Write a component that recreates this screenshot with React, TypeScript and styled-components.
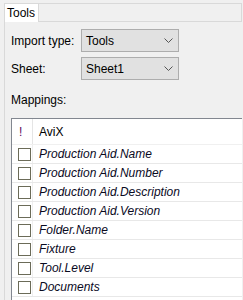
import React from 'react';
import styled, { createGlobalStyle } from 'styled-components';

const GlobalStyle = createGlobalStyle`
	html, body {
		margin: 0;
		padding: 0;
		background: #f0f0f0;
		font-family: 'Liberation Sans', Arial, sans-serif;
		font-size: 12px;
		color: #000;
		overflow: hidden;
	}
`;

const Frame = styled.div`
	margin: 3px 0 0 4px;
	width: 238px;
	height: 297px;
	display: flex;
	flex-direction: column;
`;

const TabStrip = styled.div`
	display: flex;
	height: 19px;
`;

const Tab = styled.div`
	background: #fff;
	border: 1px solid #d9d9d9;
	border-bottom: none;
	padding: 0 3px 0 2px;
	line-height: 18px;
	width: 28px;
`;

const StripRest = styled.div`
	flex: 1;
	border-top: 1px solid #d9d9d9;
	border-right: 1px solid #d9d9d9;
	border-bottom: 1px solid #d9d9d9;
`;

const Panel = styled.div`
	flex: 1;
	border-left: 1px solid #d9d9d9;
	padding: 7px 0 0 6px;
	display: flex;
	flex-direction: column;
	overflow: hidden;
`;

const FormRow = styled.div`
	display: flex;
	align-items: center;
	height: 23px;
	margin-bottom: 5px;
`;

const Label = styled.div`
	width: 70px;
`;

const Combo = styled.div`
	box-sizing: border-box;
	width: 98px;
	height: 23px;
	background: #e1e1e1;
	border: 1px solid #adadad;
	display: flex;
	align-items: center;
	justify-content: space-between;
	padding: 0 5px 0 4px;
`;

const SectionLabel = styled.div`
	margin-top: 8px;
	line-height: 14px;
`;

const Grid = styled.div`
	margin-top: 11px;
	margin-right: -20px;
	background: #fff;
	border-top: 1px solid #828790;
	border-left: 1px solid #828790;
	flex: 1;
`;

const Row = styled.div<{ $header?: boolean }>`
	display: grid;
	grid-template-columns: 21px 1fr;
	height: ${(p) => (p.$header ? 25 : 18)}px;
	border-bottom: 1px solid ${(p) => (p.$header ? '#f0f0f0' : '#e8e8e8')};
`;

const CheckCell = styled.div<{ $header?: boolean }>`
	display: flex;
	align-items: center;
	padding-left: 7px;
	border-right: 1px solid ${(p) => (p.$header ? '#e5e5e5' : '#efefef')};
	color: #5c0a5c;
`;

const TextCell = styled.div<{ $italic?: boolean }>`
	display: flex;
	align-items: center;
	padding-left: 6px;
	font-style: ${(p) => (p.$italic ? 'italic' : 'normal')};
	color: ${(p) => (p.$italic ? '#0a0a1e' : '#000')};
`;

const Box = styled.div`
	box-sizing: border-box;
	width: 13px;
	height: 13px;
	border: 1px solid #6b6b58;
	background: #fff;
	margin-left: -1px;
`;

const Chevron = () => (
	<svg width="9" height="5" viewBox="0 0 9 5">
		<polyline points="0.5,0.5 4.5,4.5 8.5,0.5" fill="none" stroke="#555" strokeWidth="1" />
	</svg>
);

const mappings = [
	'Production Aid.Name',
	'Production Aid.Number',
	'Production Aid.Description',
	'Production Aid.Version',
	'Folder.Name',
	'Fixture',
	'Tool.Level',
	'Documents',
];

export default function App() {
	return (
		<>
			<GlobalStyle />
			<Frame>
				<TabStrip>
					<Tab>Tools</Tab>
					<StripRest />
				</TabStrip>
				<Panel>
					<FormRow>
						<Label>Import type:</Label>
						<Combo>
							<span>Tools</span>
							<Chevron />
						</Combo>
					</FormRow>
					<FormRow>
						<Label>Sheet:</Label>
						<Combo>
							<span>Sheet1</span>
							<Chevron />
						</Combo>
					</FormRow>
					<SectionLabel>Mappings:</SectionLabel>
					<Grid>
						<Row $header>
							<CheckCell $header>!</CheckCell>
							<TextCell>AviX</TextCell>
						</Row>
						{mappings.map((m) => (
							<Row key={m}>
								<CheckCell>
									<Box />
								</CheckCell>
								<TextCell $italic>{m}</TextCell>
							</Row>
						))}
					</Grid>
				</Panel>
			</Frame>
		</>
	);
}
